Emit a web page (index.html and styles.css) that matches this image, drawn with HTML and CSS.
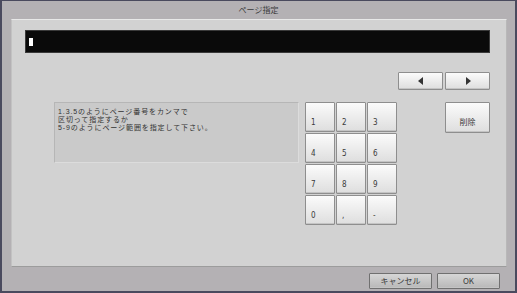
FILE: index.html
```html
<!DOCTYPE html>
<html lang="ja">
<head>
<meta charset="utf-8">
<link rel="stylesheet" href="styles.css">
</head>
<body>
<div class="win">
  <div class="title">ページ指定</div>
  <div class="panel">
    <div class="input"><span class="cursor"></span></div>
    <div class="nav">
      <button class="btn arrow"><svg width="6" height="8" viewBox="0 0 6 8"><path d="M5 0V8L0 4Z" fill="#333"/></svg></button>
      <button class="btn arrow"><svg width="6" height="8" viewBox="0 0 6 8"><path d="M1 0V8L6 4Z" fill="#333"/></svg></button>
    </div>
    <div class="main">
      <div class="info"><div>1.3.5のようにページ番号をカンマで</div><div>区切って指定するか</div><div>5-9のようにページ範囲を指定して下さい。</div></div>
      <div class="pad">
        <button class="btn key">1</button><button class="btn key">2</button><button class="btn key">3</button>
        <button class="btn key">4</button><button class="btn key">5</button><button class="btn key">6</button>
        <button class="btn key">7</button><button class="btn key">8</button><button class="btn key">9</button>
        <button class="btn key">0</button><button class="btn key">,</button><button class="btn key">-</button>
      </div>
      <button class="btn del">削除</button>
    </div>
  </div>
  <div class="footer">
    <button class="btn foot">キャンセル</button>
    <button class="btn foot">OK</button>
  </div>
</div>
</body>
</html>
```
FILE: styles.css
```css
* { box-sizing: border-box; }
html, body { margin: 0; padding: 0; }
body { width: 517px; height: 293px; background: #4a4a5e; font-family: "Noto Sans CJK JP", "DejaVu Sans", sans-serif; color: #333; }
.win {
  width: 517px; height: 293px;
  border-style: solid; border-color: #4a4a5e;
  border-width: 1px 2px 2px 2px;
  background: #b4b1b4;
  display: flex; flex-direction: column;
}
.title {
  height: 18px; line-height: 17px; text-align: center;
  font-size: 8px; color: #3a3a3a;
}
.panel {
  margin-left: 9px; width: 496px; height: 248px;
  background: #d2d2d2;
  border-top: 1px solid #e8e8e8; border-left: 1px solid #c2c2c2;
  border-right: 1px solid #b8b8b8; border-bottom: 1px solid #9c9c9c;
  display: flex; flex-direction: column;
  padding: 10px 0 0 13px;
}
.input {
  width: 465px; height: 23px;
  background: #0a0a0a; border: 1px solid #3a3a3a;
  display: flex; align-items: center; padding-left: 3px;
}
.cursor { width: 4px; height: 8px; background: #fff; }
.nav { display: flex; gap: 2px; margin-top: 19px; margin-left: 373px; }
.btn {
  margin: 0; padding: 0; font-family: inherit; color: #3a3a3a;
  background: linear-gradient(#fbfbfb, #dedede);
  border: 1px solid #8e8e8e;
  border-radius: 1px;
  box-shadow: inset 0 -1px 0 #c4c4c4;
}
.arrow { width: 45px; height: 18px; display: flex; align-items: center; justify-content: center; }
.main { display: flex; align-items: flex-start; margin-top: 12px; }
.info {
  margin-left: 29px; width: 245px; height: 61px;
  background: #cacaca; border: 1px solid #b6b6b6;
  border-bottom-color: #dcdcdc; border-right-color: #dcdcdc;
  font-family: "Liberation Sans", "Noto Sans CJK JP", sans-serif;
  font-size: 7px; letter-spacing: 0.9px; line-height: 8px; padding: 5px 0 0 3px; color: #333;
  white-space: nowrap;
}
.pad { display: grid; grid-template-columns: repeat(3, 30px); grid-auto-rows: 30px; gap: 1px; margin-left: 6px; }
.key {
  font-size: 8px; text-align: left;
  display: flex; align-items: flex-end; padding: 0 0 4px 5px;
  font-family: "DejaVu Sans Condensed", "DejaVu Sans", sans-serif;
}
.del {
  margin-left: 48px; width: 45px; height: 31px; font-size: 8px;
  display: flex; align-items: center; justify-content: center; padding-top: 8px;
}
.footer { display: flex; gap: 5px; margin-top: 6px; margin-left: 367px; }
.foot { width: 63px; height: 16px; font-size: 8px; line-height: 14px; background: linear-gradient(#d6d6d6, #b8b8b8); border-color: #707070; }
```
